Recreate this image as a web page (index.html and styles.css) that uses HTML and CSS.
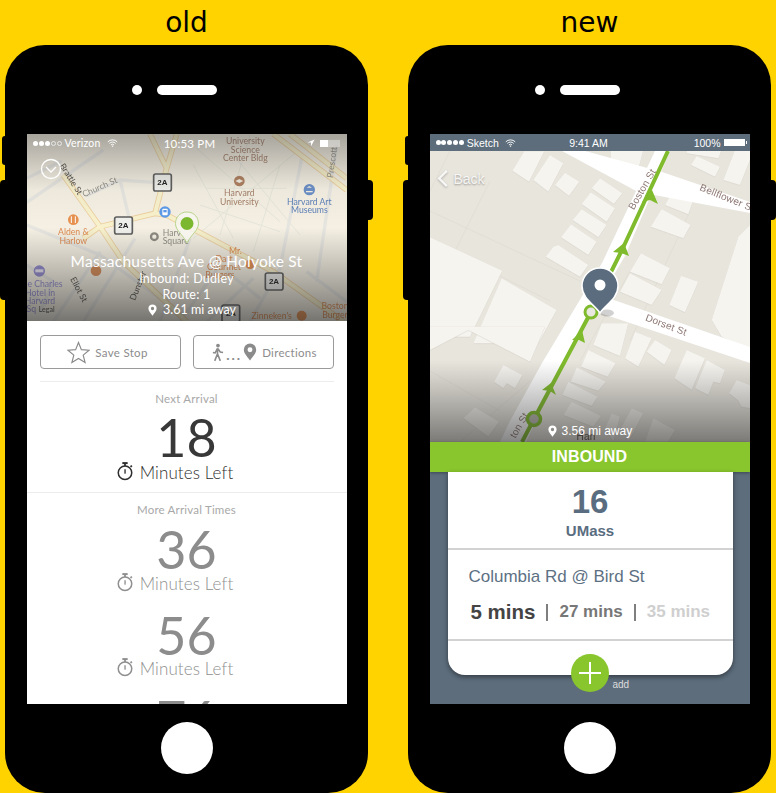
FILE: index.html
```html
<!DOCTYPE html>
<html lang="en">
<head>
<meta charset="utf-8">
<title>old / new</title>
<link rel="stylesheet" href="styles.css">
</head>
<body>
<svg class="defs" width="0" height="0" aria-hidden="true">
  <defs>
    <symbol id="watch" viewBox="0 0 18 22">
      <circle cx="9" cy="13" r="7.6" fill="none" stroke="currentColor" stroke-width="1.7"/>
      <rect x="6" y="1" width="6" height="2.2" fill="currentColor"/>
      <rect x="8" y="3" width="2" height="2.4" fill="currentColor"/>
      <rect x="15" y="4.6" width="2" height="2" fill="currentColor" transform="rotate(45 16 5.6)"/>
      <rect x="8.3" y="9" width="1.5" height="5" fill="currentColor"/>
    </symbol>
    <symbol id="pin" viewBox="0 0 12 16">
      <path d="M6 0.5a5.5 5.5 0 0 0-5.5 5.5c0 3.6 3.6 6.5 5.5 9.500c1.900-3 5.500-5.900 5.500-9.500a5.500 5.500 0 0 0-5.500-5.500zm0 3.300a2.200 2.200 0 1 1 0 4.400a2.200 2.200 0 0 1 0-4.400z" fill="currentColor" fill-rule="evenodd"/>
    </symbol>
    <symbol id="wifi" viewBox="0 0 14 10">
      <path d="M1 3.500a8.500 8.500 0 0 1 12 0M3 5.500a5.600 5.600 0 0 1 8 0M5 7.500a2.800 2.800 0 0 1 4 0" fill="none" stroke="currentColor" stroke-width="1.200"/>
      <circle cx="7" cy="9" r="0.900" fill="currentColor"/>
    </symbol>
    <linearGradient id="oldShade" x1="0" y1="0" x2="0" y2="1">
      <stop offset="0" stop-color="#3a3a3a" stop-opacity=".42"/>
      <stop offset=".3" stop-color="#3a3a3a" stop-opacity=".04"/>
      <stop offset=".5" stop-color="#3a3a3a" stop-opacity="0"/>
      <stop offset="1" stop-color="#222" stop-opacity=".6"/>
    </linearGradient>
    <linearGradient id="newShade" x1="0" y1="0" x2="0" y2="1">
      <stop offset=".72" stop-color="#333" stop-opacity="0"/>
      <stop offset="1" stop-color="#222" stop-opacity=".55"/>
    </linearGradient>
  </defs>
</svg>

<section class="device">
  <h2 class="device-title">old</h2>
  <div class="phone">
    <i class="side side-mute"></i><i class="side side-volume"></i><i class="side side-power"></i>
    <div class="earpiece"><i class="camera"></i><i class="speaker"></i></div>
    <div class="screen">
      <div class="old-map">
        <svg class="map-art" viewBox="0 0 320 187" width="320" height="187">
          <rect width="320" height="187" fill="#f5f0e3"/>
          <g transform="translate(-7,-9) scale(.33333)">
            <g class="campus">
              <path d="M530 70L780 290M560 190L800 190M520 120L640 340M640 90L840 330M690 30L600 330M830 80L520 340M540 240L780 320M780 120L700 380"/>
            </g>
            <g class="road">
              <path d="M20 232L250 75M20 160L125 108M200 212L300 165L400 172M300 165L330 290"/>
              <path d="M845 100L780 430L690 590M950 60L890 470M20 300L240 390L420 520M240 380L100 590M345 340L190 590M510 340L420 590M600 420L480 590M20 420L100 470L60 560M860 440L980 530M700 460L560 590"/>
              <path d="M620 440L720 520M20 500L80 540"/>
            </g>
            <g class="major-casing">
              <path d="M130 150L240 305L405 265L440 130L470 27M390 27L440 130M405 265L440 270L760 440L970 590M240 305L310 410L500 590M760 27L980 195M810 27L980 160M240 305L190 340"/>
            </g>
            <g class="major">
              <path d="M130 150L240 305L405 265L440 130L470 27M390 27L440 130M405 265L440 270L760 440L970 590M240 305L310 410L500 590M760 27L980 195M810 27L980 160M240 305L190 340"/>
            </g>
            <text class="lbl lbl-brown" x="676" y="58" text-anchor="middle">University</text>
            <text class="lbl lbl-brown" x="676" y="83" text-anchor="middle">Science</text>
            <text class="lbl lbl-brown" x="676" y="108" text-anchor="middle">Center Bldg</text>
            <circle cx="658" cy="168" r="16" fill="#b08060"/>
            <path d="M646 168l12-6 12 6-12 6z" fill="#f5f0e3"/>
            <text class="lbl lbl-brown" x="658" y="213" text-anchor="middle">Harvard</text>
            <text class="lbl lbl-brown" x="658" y="239" text-anchor="middle">University</text>
            <circle cx="868" cy="194" r="17" fill="#6b8fc7"/>
            <path d="M858 198h20v4h-20zM860 188h16l-8-5z" fill="#f5f0e3"/>
            <text class="lbl lbl-blue" x="868" y="239" text-anchor="middle">Harvard Art</text>
            <text class="lbl lbl-blue" x="868" y="265" text-anchor="middle">Museums</text>
            <text class="lbl lbl-gray" transform="translate(192,217) rotate(-24)">Church St</text>
            <text class="lbl lbl-dark" transform="translate(118,122) rotate(58)">Brattle St</text>
            <text class="lbl lbl-gray" transform="translate(938,160) rotate(-82)">Prescott</text>
            <text class="lbl lbl-dark" transform="translate(150,462) rotate(62)">Eliot St</text>
            <text class="lbl lbl-dark" transform="translate(345,528) rotate(-68)">Dunster</text>
            <circle cx="160" cy="284" r="16" fill="#e8914f"/>
            <path d="M154 274v20M166 274v20" stroke="#fff" stroke-width="3"/>
            <text class="lbl lbl-orange" x="160" y="330" text-anchor="middle">Alden &amp;</text>
            <text class="lbl lbl-orange" x="160" y="356" text-anchor="middle">Harlow</text>
            <circle cx="228" cy="437" r="16" fill="#d58a55"/>
            <circle cx="58" cy="438" r="17" fill="#8f88cb"/>
            <rect x="46" y="433" width="24" height="9" fill="#e8e4f2"/>
            <text class="lbl lbl-purple" x="75" y="486" text-anchor="middle">e Charles</text>
            <text class="lbl lbl-purple" x="60" y="512" text-anchor="middle">Hotel in</text>
            <text class="lbl lbl-purple" x="60" y="536" text-anchor="middle">Harvard</text>
            <text class="lbl lbl-purple" x="34" y="562" text-anchor="middle">Sq</text>
            <text class="lbl lbl-legal" x="80" y="561" text-anchor="middle">Legal</text>
            <circle cx="403" cy="335" r="10" fill="none" stroke="#8d8a82" stroke-width="7"/>
            <text class="lbl lbl-gray" x="428" y="334">Harv</text>
            <text class="lbl lbl-gray" x="428" y="358">Square</text>
            <text class="lbl lbl-orange" x="646" y="386" text-anchor="middle">Mr.</text>
            <text class="lbl lbl-orange" x="612" y="410" text-anchor="middle">Dart</text>
            <text class="lbl lbl-orange" x="612" y="436" text-anchor="middle">Gourmet</text>
            <text class="lbl lbl-orange" x="600" y="460" text-anchor="middle">Burgers</text>
            <circle cx="690" cy="418" r="14" fill="#e8914f"/>
            <text class="lbl lbl-orange" x="755" y="581" text-anchor="middle">Zinneken's</text>
            <circle cx="845" cy="572" r="15" fill="#e8914f"/>
            <text class="lbl lbl-orange" x="945" y="552" text-anchor="middle">Boston</text>
            <text class="lbl lbl-orange" x="945" y="578" text-anchor="middle">Burger</text>
            <circle cx="435" cy="261" r="17" fill="#5c9ae8"/>
            <rect x="427" y="251" width="16" height="20" rx="3" fill="#fff"/>
            <rect x="430" y="255" width="10" height="7" fill="#5c9ae8"/>
            <g class="shield-box"><rect x="401" y="147" width="53" height="51" rx="6"/><text x="427" y="181" text-anchor="middle">2A</text></g>
            <g class="shield-box"><rect x="284" y="276" width="53" height="51" rx="6"/><text x="310" y="310" text-anchor="middle">2A</text></g>
            <g class="shield-box"><rect x="736" y="444" width="53" height="51" rx="6"/><text x="762" y="478" text-anchor="middle">2A</text></g>
            <g class="shield-box"><rect x="606" y="540" width="53" height="51" rx="6"/><text x="633" y="574" text-anchor="middle">2A</text></g>
          </g>
          <rect width="320" height="187" fill="url(#oldShade)"/>
          <path d="M160 78c-8 0-11.500 6.500-11.500 11.500 0 7 7 10.500 11.500 19.500 4.500-9 11.500-12.500 11.500-19.500 0-5-3.500-11.500-11.500-11.500z" fill="#f7f6f0" fill-opacity=".85" stroke="#b7d58c"/>
          <circle cx="160" cy="89.500" r="6.500" fill="#7cb82f"/>
          <g fill="none" stroke="#fff" stroke-width="1.300">
            <circle cx="24" cy="35" r="9.500"/>
            <path d="M19 33l5 5 5-5"/>
          </g>
        </svg>
        <div class="status status-old">
          <span class="status-left">
            <span class="dots"><i class="dot"></i><i class="dot"></i><i class="dot"></i><i class="dot dot-empty"></i><i class="dot dot-empty"></i></span>
            <span>Verizon</span>
            <svg class="wifi"><use href="#wifi"/></svg>
          </span>
          <span class="status-time">10:53 PM</span>
          <span class="status-right">
            <svg class="locate" viewBox="0 0 10 10"><path d="M9.500.5L.5 4.500h4.500v4.500z" fill="#fff"/></svg>
            <span class="battery-old"><i></i></span>
          </span>
        </div>
        <div class="old-caption">
          <div class="old-stop">Massachusetts Ave @ Holyoke St</div>
          <div class="old-line">Inbound: Dudley</div>
          <div class="old-line">Route: 1</div>
          <div class="old-line old-away"><svg class="pin-small"><use href="#pin"/></svg>3.61 mi away</div>
        </div>
      </div>
      <div class="old-body">
        <div class="actions">
          <div class="action action-save">
            <svg class="star" viewBox="0 0 24 24"><path d="M12 1.500l3 7.500 8 .6-6.100 5.100 2 7.800-6.900-4.300-6.900 4.300 2-7.800L1 9.600l8-.6z" fill="none" stroke="#8b8b8b" stroke-width="1.200"/></svg>
            <span>Save Stop</span>
          </div>
          <div class="action action-tight">
            <svg class="walk" viewBox="0 0 14 20"><circle cx="7.500" cy="2.500" r="2" fill="#8b8b8b"/><path d="M7 5.500L4.500 10.500 2 10M7 5.500l3 4 3 .5M7 5.500v6l3 7.500M7 11.500L4 19" fill="none" stroke="#8b8b8b" stroke-width="1.700"/></svg>
            <span class="ellipsis">...</span>
            <svg class="pin-action"><use href="#pin"/></svg>
            <span>Directions</span>
          </div>
        </div>
        <hr class="rule rule-inset">
        <div class="caption caption-next">Next Arrival</div>
        <div class="num num-next">18</div>
        <div class="left left-next"><svg class="watch"><use href="#watch"/></svg>Minutes Left</div>
        <hr class="rule rule-full">
        <div class="caption caption-more">More Arrival Times</div>
        <div class="num num-a">36</div>
        <div class="left left-a"><svg class="watch"><use href="#watch"/></svg>Minutes Left</div>
        <div class="num num-b">56</div>
        <div class="left left-b"><svg class="watch"><use href="#watch"/></svg>Minutes Left</div>
        <div class="num num-c">76</div>
      </div>
    </div>
    <div class="home"></div>
  </div>
</section>

<section class="device device-new">
  <h2 class="device-title">new</h2>
  <div class="phone">
    <i class="side side-mute"></i><i class="side side-volume"></i><i class="side side-power"></i>
    <div class="earpiece"><i class="camera"></i><i class="speaker"></i></div>
    <div class="screen screen-new">
      <div class="status status-new">
        <span class="status-left">
          <span class="dots dots-new"><i class="dot"></i><i class="dot"></i><i class="dot"></i><i class="dot"></i><i class="dot"></i></span>
          <span>Sketch</span>
          <svg class="wifi"><use href="#wifi"/></svg>
        </span>
        <span class="status-time">9:41 AM</span>
        <span class="status-right">
          <span>100%</span>
          <span class="battery-new"><i></i></span>
        </span>
      </div>
      <div class="new-map">
        <svg class="map-art" viewBox="0 0 320 291" width="320" height="291">
          <rect width="320" height="291" fill="#e8e5dd"/>
          <g class="faint">
            <path d="M0 60L150 130M0 90L120 150M20 0L-20 80M60 30L20 110M100 230L30 291M200 120L150 210M260 60L200 190M0 220L70 260"/>
          </g>
          <g class="blocks" transform="translate(-5,-21) scale(.33333)">
            <path d="M262 122L298 64H358L312 155z"/>
            <path d="M325 150L375 75L415 100L370 185z"/>
            <path d="M390 165L420 128L463 155L432 198z"/>
            <path d="M500 175L525 145L592 190L567 222z"/>
            <path d="M470 222L497 187L570 235L545 275z"/>
            <path d="M443 270L470 238L545 285L520 322z"/>
            <path d="M408 322L438 283L515 335L490 375z"/>
            <path d="M362 380L385 350L400 345L490 405L465 440z"/>
            <path d="M557 60H655L640 118L557 85z"/>
            <path d="M785 60H890L880 85L785 70z"/>
            <path d="M798 105L815 78L885 110L870 140z"/>
            <path d="M895 150L930 60H975V90L945 165z"/>
            <path d="M720 225L745 180L805 210L790 253z"/>
            <path d="M677 290L710 237L797 285L775 325z"/>
            <path d="M615 425L648 370L735 415L710 463z"/>
            <path d="M585 485L615 430L710 480L680 525z"/>
            <path d="M733 525L768 437L820 455L780 547z"/>
            <path d="M860 570L940 320L975 285V660L890 620z"/>
            <path d="M15 322L232 422L135 620H15z"/>
            <path d="M230 445L395 540L340 640H145z"/>
          </g>
          <g class="blocks" transform="translate(-5,179) scale(.33333)">
            <path d="M15 -10H360L315 95L130 0L15 60z"/>
            <path d="M505 45L530 -20H610L585 78z"/>
            <path d="M600 85L630 5L680 25L640 110z"/>
            <path d="M665 65L690 30L740 60L718 105z"/>
            <path d="M468 110L490 60L572 100L548 140z"/>
            <path d="M437 155L455 112L543 155L520 182z"/>
            <path d="M412 195L430 155L518 200L500 228z"/>
            <path d="M415 255L440 215L528 258L505 290z"/>
            <path d="M748 145L785 60L840 85L800 180z"/>
            <path d="M810 175L845 90L900 120L885 160L865 155L850 195z"/>
            <path d="M912 190L935 150L975 165V235L950 230L938 210z"/>
            <path d="M207 155L235 105L292 135L270 175L245 160L235 175z"/>
            <path d="M115 265L150 232L222 275L190 320z"/>
            <path d="M540 295L560 250L585 260L565 335z"/>
            <path d="M590 290L620 235L655 250L610 335z"/>
            <path d="M660 335L685 265L750 300L730 335z"/>
          </g>
          <g fill="#fff">
            <path d="M225 0H240L195 105L132 212L96 291H70L80 270L112 212L172 112z"/>
            <path d="M132 0H155L232 21L320 51V62L208 41z"/>
            <path d="M178 147L320 196V212L170 162z"/>
          </g>
          <text class="street" transform="translate(296,50) rotate(22)">Bellflower St</text>
          <text class="street" transform="translate(215,40) rotate(-60)">Boston St</text>
          <text class="street" transform="translate(235,177) rotate(21)">Dorset St</text>
          <text class="street" transform="translate(92,276) rotate(-60)">ton St</text>
          <text class="street street-small" x="156" y="289">Han</text>
          <path d="M238 0L192 99L161 161L104 268L92 291" stroke="#7fbb2c" stroke-width="4" fill="none"/>
          <g fill="#7fbb2c">
            <path d="M222 39L212 51L220 49L228 53z"/>
            <path d="M194 92L183 101L191 102L199 105z"/>
            <path d="M152 179L142 189L149 189L155 192z"/>
            <path d="M121 232L112 239L120 240L126 244z"/>
          </g>
          <circle cx="161" cy="161" r="6" fill="#e8e8e0" stroke="#7fbb2c" stroke-width="3"/>
          <circle cx="104" cy="268" r="6.500" fill="#b9b8b0" stroke="#7fbb2c" stroke-width="3.500"/>
          <rect width="320" height="291" fill="url(#newShade)"/>
          <ellipse cx="177" cy="162" rx="7" ry="3.500" fill="#000" fill-opacity=".18"/>
          <path d="M170 162c-5-8-18-14-18-27a18 18 0 0 1 36 0c0 13-13 19-18 27z" fill="#5a6c7d" stroke="#fff" stroke-width="1.500"/>
          <circle cx="170" cy="134" r="5.500" fill="#fff"/>
        </svg>
        <div class="back"><svg class="chevron" viewBox="0 0 12 20"><path d="M10 2L2 10l8 8" fill="none" stroke="currentColor" stroke-width="2.400"/></svg><span>Back</span></div>
        <div class="new-away"><svg class="pin-small"><use href="#pin"/></svg>3.56 mi away</div>
      </div>
      <div class="direction">INBOUND</div>
      <div class="new-main">
        <div class="card">
          <div class="route">
            <div class="route-num">16</div>
            <div class="route-name">UMass</div>
          </div>
          <div class="stop">
            <div class="stop-name">Columbia Rd @ Bird St</div>
            <div class="times">
              <span class="time time-first">5 mins</span>
              <i class="bar"></i>
              <span class="time time-second">27 mins</span>
              <i class="bar"></i>
              <span class="time time-third">35 mins</span>
            </div>
          </div>
        </div>
        <div class="add">
          <span class="add-button"></span>
          <span class="add-label">add</span>
        </div>
      </div>
    </div>
    <div class="home"></div>
  </div>
</section>
</body>
</html>
```
FILE: styles.css
```css
* { box-sizing: border-box; }
html, body { margin: 0; padding: 0; }
body {
  width: 776px;
  height: 793px;
  overflow: hidden;
  background: #ffd300;
  display: flex;
  align-items: flex-start;
  padding-left: 5px;
  gap: 40px;
  font-family: "Lato", "Liberation Sans", sans-serif;
}
.defs { position: absolute; }
.device { width: 363px; }
.device-title {
  margin: 0;
  height: 45px;
  padding-top: 5px;
  text-align: center;
  font: 400 28px/36px "DejaVu Sans", sans-serif;
  color: #000;
}
.phone {
  position: relative;
  width: 363px;
  height: 748px;
  background: #000;
  border-radius: 40px;
  padding-top: 89px;
  display: flex;
  flex-direction: column;
  align-items: center;
}
.side { position: absolute; background: #000; }
.side-mute { left: -3px; top: 91px; width: 4px; height: 29px; border-radius: 3px 0 0 3px; }
.side-volume { left: -5px; top: 135px; width: 6px; height: 120px; border-radius: 4px 0 0 4px; }
.side-power { right: -5px; top: 135px; width: 6px; height: 40px; border-radius: 0 4px 4px 0; }
.earpiece { position: absolute; top: 40px; left: 127px; display: flex; align-items: center; gap: 15px; }
.camera { width: 10px; height: 10px; border-radius: 50%; background: #fff; }
.speaker { width: 60px; height: 10px; border-radius: 5px; background: #fff; }
.screen {
  width: 320px;
  height: 570px;
  background: #fff;
  overflow: hidden;
  display: flex;
  flex-direction: column;
}
.home { width: 52px; height: 52px; margin-top: 18px; border-radius: 50%; background: #fff; }

/* status bars */
.status {
  height: 17px;
  display: flex;
  align-items: center;
  justify-content: space-between;
  position: relative;
  color: #fff;
  font-family: "Liberation Sans", sans-serif;
}
.status-left { display: flex; align-items: center; gap: 3px; }
.status-right { display: flex; align-items: center; }
.status-time { position: absolute; left: 0; right: 0; text-align: center; }
.dots { display: flex; gap: 1px; }
.dot { width: 5px; height: 5px; border-radius: 50%; background: #fff; }
.dot-empty { background: transparent; border: 1px solid #e8e8e8; }
.wifi { width: 11px; height: 8px; margin-left: 3px; color: #fff; }

.status-old { font-family: "Lato", sans-serif; font-size: 10.500px; height: 18px; padding: 0 7px 0 6px; letter-spacing: .2px; }
.status-old .status-time { font-size: 11.500px; left: 0; right: -6px; }
.locate { width: 8px; height: 8px; margin-right: 5px; }
.battery-old { width: 20px; height: 7px; background: rgba(255, 255, 255, .35); display: block; }
.battery-old i { display: block; width: 8px; height: 7px; background: #fff; }

.status-new { background: #5d6d7c; font-size: 10.500px; padding: 0 5px 0 6px; }
.status-new .status-time { left: 0; right: 2px; }
.dots-new { gap: .8px; }
.dots-new .dot { width: 5px; height: 5px; }

.battery-new { width: 21px; height: 7px; margin-left: 3px; background: #fff; display: block; position: relative; }
.battery-new i { position: absolute; right: -2px; top: 2px; width: 1px; height: 3px; background: #fff; }

/* old app */
.old-map {
  position: relative;
  height: 187px;
  flex: none;
  overflow: hidden;
  display: flex;
  flex-direction: column;
  justify-content: space-between;
}
.map-art { position: absolute; left: 0; top: 0; filter: blur(.35px); }
.road path { fill: none; stroke: #e6e5e0; stroke-width: 10; }
.campus path { fill: none; stroke: #e2e3d8; stroke-width: 2.500; }
.major-casing path { fill: none; stroke: #eccfa0; stroke-width: 17; }
.major path { fill: none; stroke: #f8f1cc; stroke-width: 12; }
.lbl { font: 400 26px "Lato", sans-serif; }
.lbl-brown { fill: #a5806a; }
.lbl-blue { fill: #5b7fb8; }
.lbl-gray { fill: #8f8d85; }
.lbl-dark { fill: #55524d; }
.lbl-orange { fill: #df8a4e; }
.lbl-purple { fill: #8f88cb; }
.lbl-legal { fill: #4a4a4a; font-size: 21px; }
.shield-box rect { fill: #efefec; stroke: #5e5e5e; stroke-width: 5; }
.shield-box text { font: 700 24px "Liberation Sans", sans-serif; fill: #222; }
.old-caption { position: relative; color: #fff; text-align: center; padding-bottom: 3px; }
.old-stop { font-size: 15.500px; line-height: 18px; letter-spacing: .25px; height: 19px; }
.old-line { font-size: 12.500px; line-height: 16px; letter-spacing: .25px; }
.old-away { display: flex; align-items: center; justify-content: center; gap: 6px; margin-top: -1px; padding-left: 11px; letter-spacing: 0; }
.pin-small { width: 9px; height: 12px; color: #fff; }

.old-body { flex: 1; min-height: 0; overflow: hidden; }
.actions { display: flex; gap: 12px; padding: 14px 13px 0; }
.action {
  width: 141px;
  height: 34px;
  border: 1px solid #9a9a9a;
  border-radius: 4px;
  display: flex;
  align-items: center;
  justify-content: center;
  gap: 5px;
  color: #8c8c8c;
  font-size: 11.500px;
  letter-spacing: .3px;
}
.action-save { padding-right: 5px; }
.action-tight { gap: 0; padding-left: 2px; }
.action-tight span:last-child { margin-left: 5px; }
.star { width: 23px; height: 23px; }
.walk { width: 13px; height: 19px; }
.ellipsis { font-size: 14px; font-weight: 700; letter-spacing: 2px; width: 19px; padding: 5px 0 0 2px; }
.pin-action { width: 14px; height: 18px; color: #8b8b8b; }
.rule { border: 0; height: 1px; background: #ececec; margin: 0; }
.rule-inset { margin: 12px 13px 0; }
.rule-full { margin-top: 10px; }
.caption { height: 16px; font-size: 11.500px; line-height: 18px; text-align: center; color: #a8a8a8; letter-spacing: .2px; }
.caption-next { margin-top: 8px; }
.caption-more { margin-top: 8px; }
.num { height: 40px; line-height: 40px; font-size: 52px; font-weight: 400; text-align: center; color: #8c8c8c; }
.num-next { margin-top: 11px; color: #383838; }
.num-a { margin-top: 12px; }
.num-b { margin-top: 22px; }
.num-c { margin-top: 21px; }
.left {
  height: 20px;
  display: flex;
  align-items: center;
  justify-content: center;
  gap: 7px;
  font-size: 17px;
  font-weight: 300;
  letter-spacing: .1px;
  color: #8f8f8f;
}
.left-next { margin-top: 5px; color: #2e2e2e; }
.left-a { margin-top: 4px; }
.left-b { margin-top: 3px; }
.watch { width: 16px; height: 20px; margin: -2px 0 0 -23px; }

/* new app */
.screen-new { background: #5d6d7c; }
.new-map { position: relative; height: 291px; flex: none; overflow: hidden; }
.blocks path { fill: #f6f4ef; }
.blocks { filter: drop-shadow(0 1px 0 #cfccc4); }
.faint path { fill: none; stroke: #dedbd2; stroke-width: .7; }
.street { font: 400 10px "Liberation Sans", sans-serif; fill: #8d7773; letter-spacing: .2px; text-anchor: middle; }
.street-small { fill: #5d5248; }
.back {
  position: absolute;
  left: 7px;
  top: 18px;
  display: flex;
  align-items: center;
  gap: 5px;
  color: rgba(255, 255, 255, .85);
  font: 400 14px/18px "Liberation Sans", sans-serif;
  text-shadow: 0 1px 2px rgba(0, 0, 0, .35);
}
.chevron { width: 12px; height: 19px; filter: drop-shadow(0 1px 1px rgba(0, 0, 0, .3)); }
.new-away {
  position: absolute;
  left: 118px;
  top: 272px;
  display: flex;
  align-items: center;
  gap: 5px;
  color: #fff;
  font: 400 12px/16px "Liberation Sans", sans-serif;
}
.direction {
  position: relative;
  height: 30px;
  flex: none;
  background: #89c62d;
  color: #fff;
  font: 700 16px/30px "Liberation Sans", sans-serif;
  letter-spacing: .1px;
  text-align: center;
  box-shadow: 0 1px 3px rgba(0, 0, 0, .35);
}
.new-main { position: relative; flex: 1; min-height: 0; }
.card {
  width: 285px;
  height: 203px;
  margin-left: 18px;
  background: #fff;
  border-radius: 0 0 17px 17px;
  box-shadow: 0 2px 5px rgba(0, 0, 0, .45);
}
.route { height: 78px; border-bottom: 2px solid #d2d2d2; text-align: center; color: #5a6d80; font-family: "Liberation Sans", sans-serif; font-weight: 700; }
.route-num { font-size: 33px; line-height: 38px; padding-top: 11px; height: 49px; }
.route-name { font-size: 15px; line-height: 18px; margin-top: 1px; }
.stop { height: 91px; border-bottom: 2px solid #d2d2d2; padding: 17px 0 0 21px; font-family: "Liberation Sans", sans-serif; }
.stop-name { font-size: 17px; line-height: 20px; color: #5d7083; }
.times { display: flex; align-items: center; gap: 0; margin-top: 13px; padding-left: 2px; height: 24px; font-weight: 700; }
.time-first { font-size: 20.500px; color: #444; }
.time-second { font-size: 17px; color: #777; }
.time-third { font-size: 17px; color: #cfcfcf; }
.bar { width: 2px; height: 17px; background: #7f7f7f; margin: 0 11px; }
.add { position: absolute; left: 141px; top: 182px; display: flex; }
.add-button {
  position: relative;
  width: 38px;
  height: 38px;
  border-radius: 50%;
  background: #89c62d;
}
.add-button::before, .add-button::after { content: ""; position: absolute; background: #fff; }
.add-button::before { left: 8px; top: 18px; width: 22px; height: 2px; }
.add-button::after { left: 18px; top: 8px; width: 2px; height: 22px; }
.add-label { margin: 24px 0 0 4px; font: 400 10px/14px "Liberation Sans", sans-serif; color: #ddd; }
```
